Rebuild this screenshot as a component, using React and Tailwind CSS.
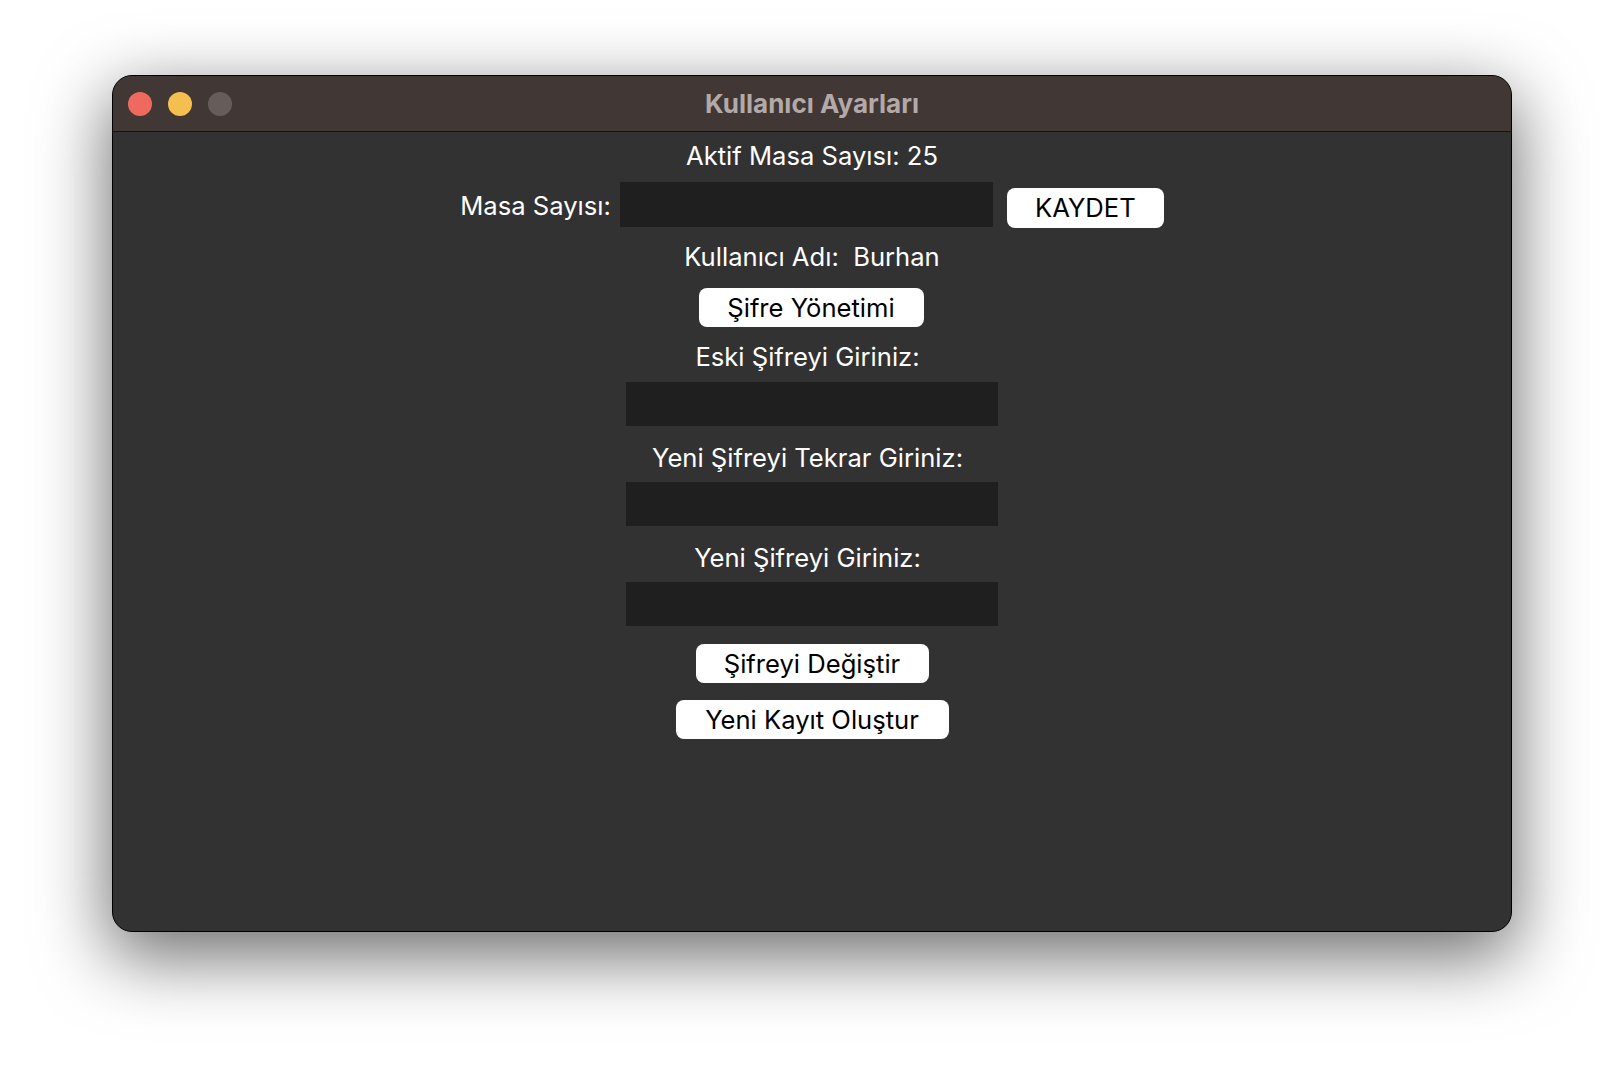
export default function App() {
  const label = "text-[25.6px] leading-[30px] text-white text-center whitespace-pre";
  const btn =
    "h-[39px] bg-white rounded-[8px] text-black text-[25.6px] leading-[30px] flex items-center justify-center whitespace-nowrap";
  const input = "w-[372px] h-[44px] bg-[#1f1f1f]";
  return (
    <div className="min-h-[1080px] w-full bg-white pt-[75px] [font-family:Inter,'Noto_Sans',sans-serif]">
      <div className="mx-auto w-[1400px] h-[857px] rounded-[20px] overflow-hidden bg-[#323232] border border-black shadow-[0_22px_70px_4px_rgba(0,0,0,0.56)] flex flex-col">
        <div className="relative h-[56px] shrink-0 bg-[#413735] border-b border-[#141212] flex items-center justify-center">
          <div className="absolute left-[15px] top-[16px] flex gap-[16px]">
            <div className="w-[24px] h-[24px] rounded-full bg-[#ee6a5f]" />
            <div className="w-[24px] h-[24px] rounded-full bg-[#f5bf4f]" />
            <div className="w-[24px] h-[24px] rounded-full bg-[#665d5b]" />
          </div>
          <div className="text-[26px] font-bold text-[#b3a9a7]">Kullanıcı Ayarları</div>
        </div>

        <div className="flex flex-col items-center">
          <div className={`${label} mt-[9px]`}>Aktif Masa Sayısı: 25</div>

          <div className="flex items-start mt-[11px] h-[45px]">
            <div className={`${label} mt-[9px]`}>Masa Sayısı:</div>
            <div className="ml-[9px] w-[373px] h-[45px] bg-[#1f1f1f]" />
            <div className={`${btn} ml-[14px] mt-[6px] w-[157px] h-[40px]`}>KAYDET</div>
          </div>

          <div className={`${label} mt-[15px]`}>Kullanıcı Adı:  Burhan</div>

          <div className={`${btn} mt-[16px] mr-[2px] w-[225px]`}>Şifre Yönetimi</div>

          <div className={`${label} mt-[15px] mr-[9px]`}>Eski Şifreyi Giriniz:</div>
          <div className={`${input} mt-[10px]`} />

          <div className={`${label} mt-[17px] mr-[9px]`}>Yeni Şifreyi Tekrar Giriniz:</div>
          <div className={`${input} mt-[9px]`} />

          <div className={`${label} mt-[17px] mr-[9px]`}>Yeni Şifreyi Giriniz:</div>
          <div className={`${input} mt-[9px]`} />

          <div className={`${btn} mt-[18px] w-[233px]`}>Şifreyi Değiştir</div>
          <div className={`${btn} mt-[17px] w-[273px]`}>Yeni Kayıt Oluştur</div>
        </div>
      </div>
    </div>
  );
}
